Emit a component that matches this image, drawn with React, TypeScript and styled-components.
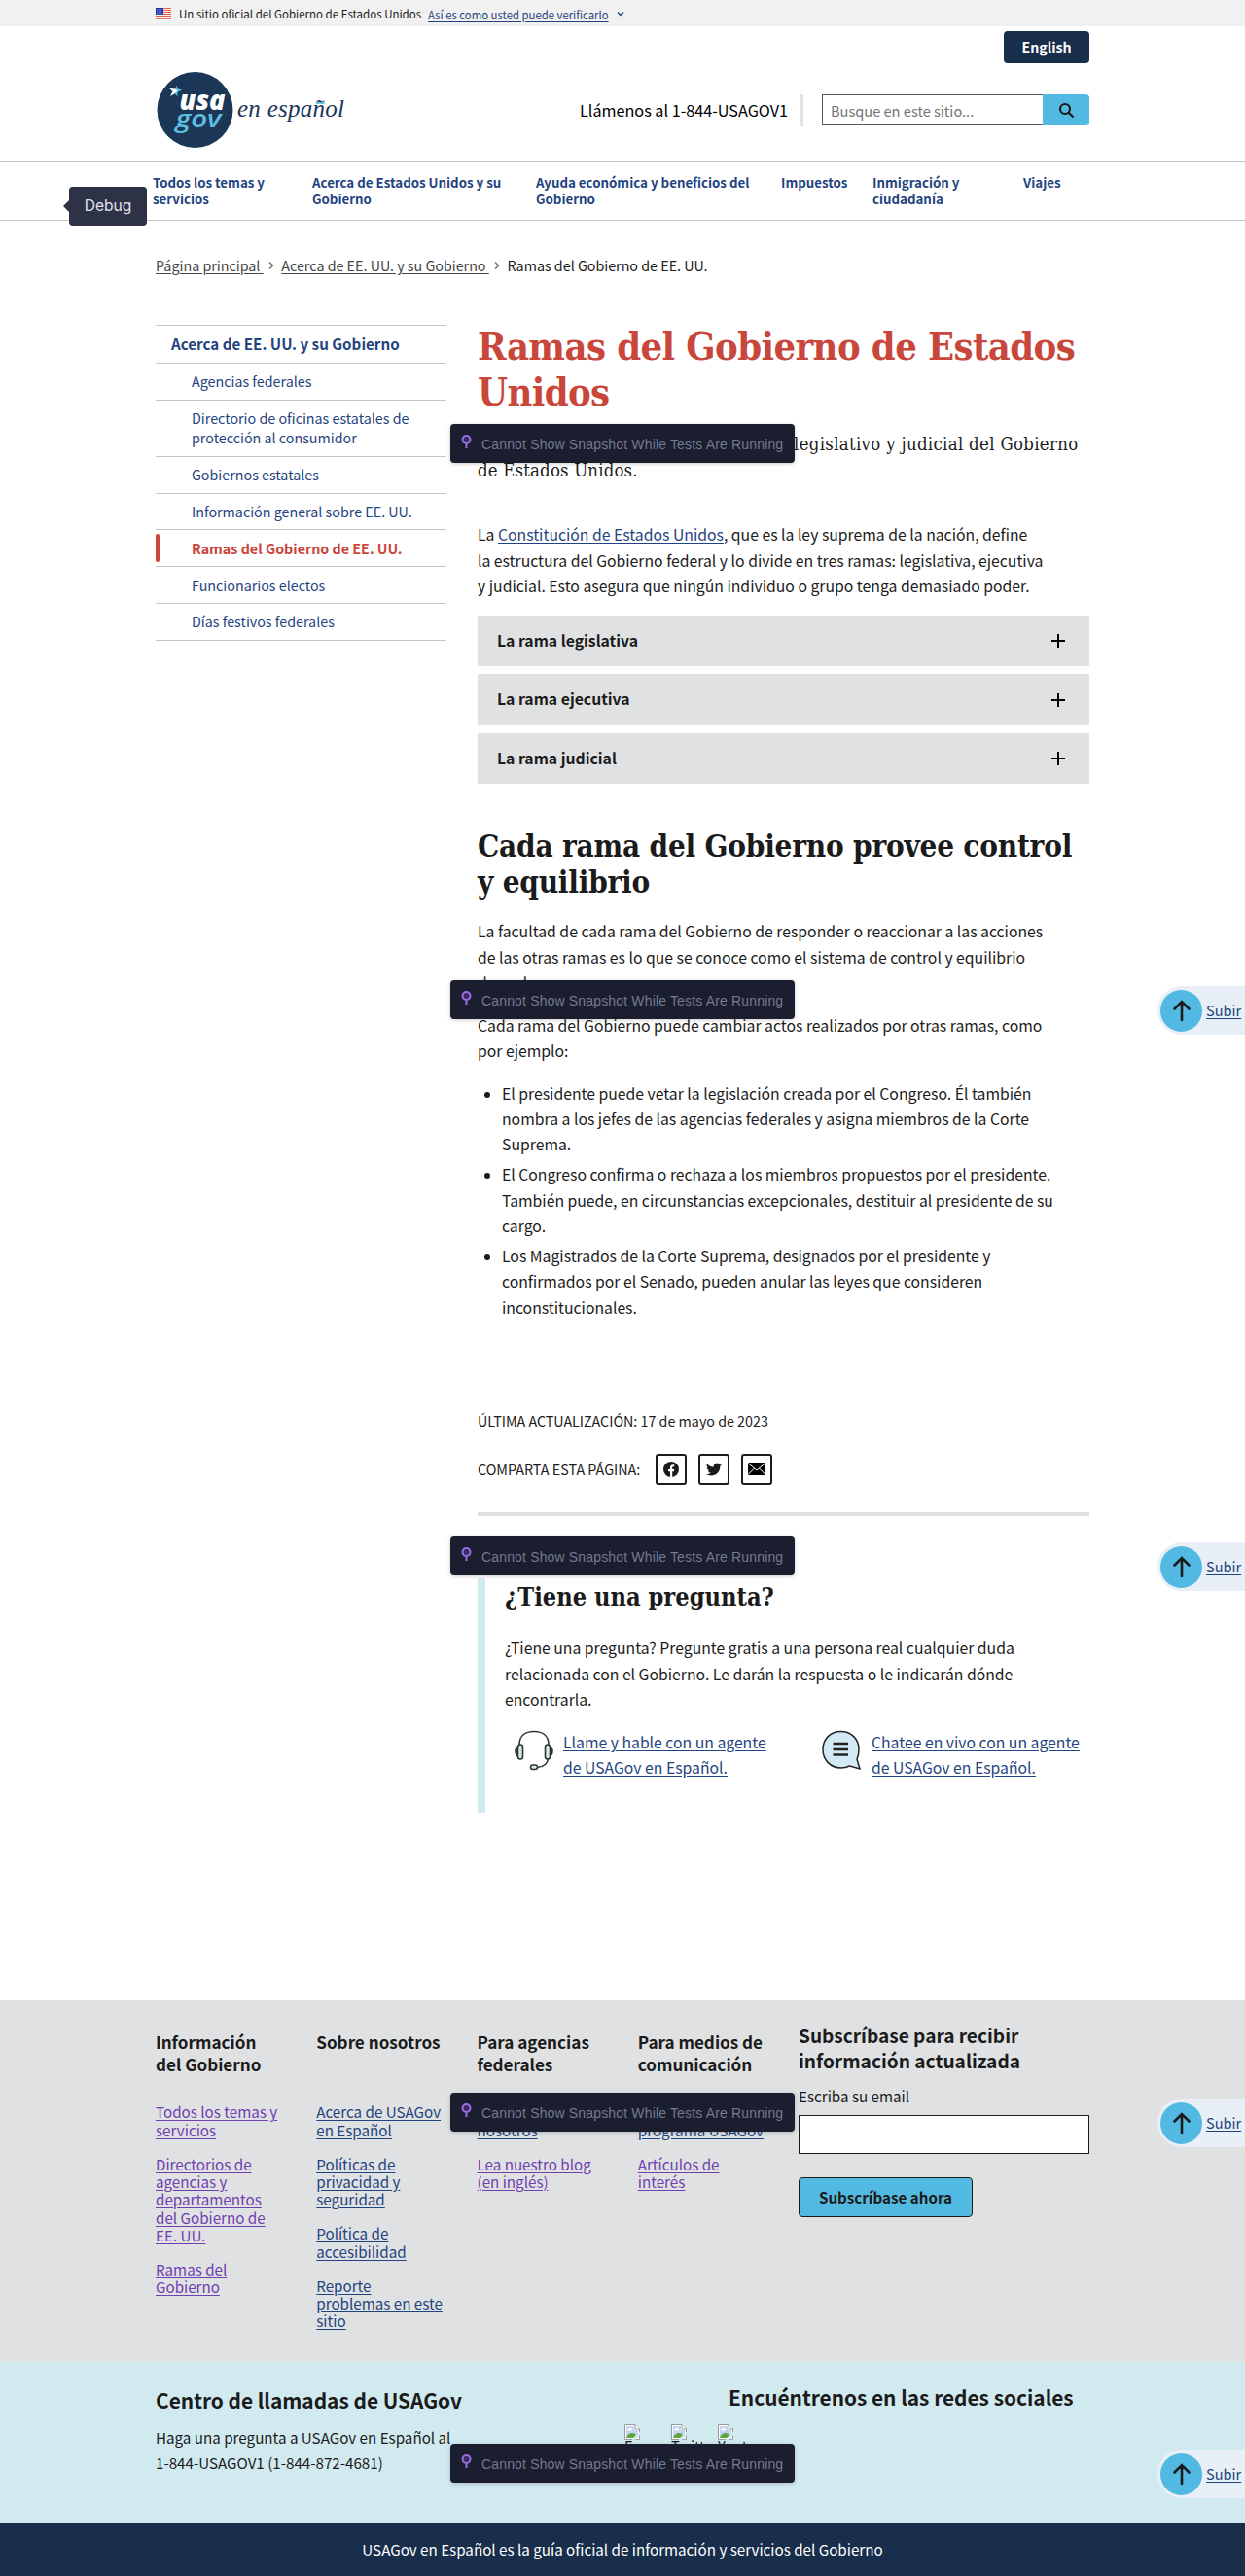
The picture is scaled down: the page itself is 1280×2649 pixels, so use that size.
import React from "react";
import styled, { createGlobalStyle } from "styled-components";

const sans = `"Noto Sans CJK SC", "Open Sans", sans-serif`;
const serif = `"DejaVu Serif Condensed", "DejaVu Serif", serif`;
const ink = "#1b1b1b";
const blue = "#1f4480";
const sky = "#52bae2";
const navy = "#182e4b";

const Global = createGlobalStyle`
  *, *::before, *::after { box-sizing: border-box; }
  body { margin: 0; background: #fff; color: ${ink}; font-family: ${sans}; }
  h1, h2, h3, p, ul { margin: 0; padding: 0; }
`;

const Page = styled.div`
  position: relative;
  width: 1280px;
  height: 2649px;
  overflow: hidden;
  font-size: 15.18px;
`;
const Container = styled.div`
  width: 960px;
  margin: 0 auto;
`;
const Line = styled.span<{ $ls?: number }>`
  display: block;
  white-space: nowrap;
  letter-spacing: ${(p) => p.$ls ?? 0}px;
`;
const Link = styled.a<{ $visited?: boolean }>`
  color: ${(p) => (p.$visited ? "#7040b0" : blue)};
  text-decoration: underline;
  text-underline-offset: 2px;
`;

/* ---------- banner and header ---------- */
const Banner = styled.div`
  height: 27px;
  background: #f1f1f1;
`;
const BannerRow = styled(Container)`
  display: flex;
  align-items: center;
  height: 27px;
  font-size: 11.5px;
  line-height: 16px;
  white-space: nowrap;
`;
const BannerText = styled.span`
  width: 256px;
  margin-left: 8px;
`;
const BannerLink = styled(Link)`
  margin-top: 2px;
  width: 194px;
  font-size: 11.35px;
`;
const Header = styled.header`
  height: 140px;
  border-bottom: 1px solid #c3c5c7;
`;
const HeaderInner = styled(Container)`
  display: flex;
  flex-direction: column;
`;
const LangButton = styled.button`
  align-self: flex-end;
  width: 88px;
  height: 33px;
  margin-top: 5px;
  padding: 0;
  border: 0;
  border-radius: 4px;
  background: ${navy};
  color: #fff;
  font: 700 14.2px/33px ${sans};
`;
const BrandRow = styled.div`
  display: flex;
  align-items: center;
  height: 78px;
  margin-top: 9px;
`;
const Phone = styled.span`
  margin-left: auto;
  width: 215px;
  font-size: 16.2px;
  line-height: 24px;
  color: #000;
  white-space: nowrap;
`;
const Divider = styled.span`
  width: 3px;
  height: 33px;
  margin: 0 19px 0 12px;
  background: #e2e3e4;
`;
const Search = styled.form`
  display: flex;
  width: 275px;
  height: 32px;
`;
const SearchInput = styled.input`
  flex: 1;
  min-width: 0;
  padding: 0 8px;
  border: 1px solid #565c65;
  border-right: 0;
  font: 14.6px ${sans};
  &::placeholder { color: #757575; opacity: 1; }
`;
const SearchButton = styled.button`
  display: flex;
  align-items: center;
  justify-content: center;
  width: 48px;
  padding: 0;
  border: 0;
  border-radius: 0 4px 4px 0;
  background: ${sky};
`;
const Nav = styled.nav`
  height: 60px;
  border-bottom: 1px solid #c3c5c7;
`;
const NavList = styled.div`
  display: flex;
  width: 966px;
  margin: 0 auto 0 157px;
  padding-top: 12px;
  color: ${blue};
  font-size: 13.3px;
  font-weight: 700;
  line-height: 17px;
`;
const NavItem = styled.div<{ $w: number }>`
  width: ${(p) => p.$w}px;
`;
const Crumbs = styled(Container)`
  display: flex;
  align-items: center;
  height: 20px;
  margin-top: 36px;
  font-size: 14.3px;
  line-height: 20px;
  white-space: nowrap;
`;
const Crumb = styled.a<{ $w: number }>`
  width: ${(p) => p.$w}px;
  color: #454545;
  text-decoration: underline;
  text-underline-offset: 2px;
  white-space: pre;
`;
const CrumbSep = styled.svg`
  margin: 0 7.3px 0 5px;
`;

/* ---------- main ---------- */
const Main = styled(Container)`
  display: flex;
  justify-content: space-between;
  height: 1774px;
`;
const Side = styled.aside`
  width: 299px;
  margin-top: 51px;
  border-bottom: 1px solid #c3c5c7;
  align-self: flex-start;
  color: ${blue};
`;
const SideTitle = styled.div`
  height: 39px;
  padding: 8px 16px;
  border-top: 1px solid #c3c5c7;
  font-size: 15.18px;
  font-weight: 700;
  line-height: 20px;
`;
const SideItem = styled.div<{ $active?: boolean }>`
  position: relative;
  padding: 8.4px 0 8.46px 37px;
  border-top: 1px solid #c3c5c7;
  font-size: 14.3px;
  line-height: 20px;
  color: ${(p) => (p.$active ? "#c9463b" : blue)};
  font-weight: ${(p) => (p.$active ? 700 : 400)};
  &::before {
    content: "";
    display: ${(p) => (p.$active ? "block" : "none")};
    position: absolute;
    left: 0;
    top: 4px;
    bottom: 4px;
    width: 4px;
    border-radius: 4px;
    background: #c9463b;
  }
`;
const Content = styled.article`
  width: 629px;
  padding-top: 50px;
`;
const H1 = styled.h1`
  color: #c9463b;
  font: 700 39.6px/47px ${serif};
`;
const Intro = styled.p`
  margin-top: 16.4px;
  font: 400 18.4px/27px ${serif};
`;
const IntroLine = styled.span`
  display: flex;
  white-space: nowrap;
`;
const IntroStart = styled.span`
  width: 325px;
  overflow: hidden;
`;
const P = styled.p<{ $mt: number; $size?: number }>`
  margin-top: ${(p) => p.$mt}px;
  font-size: ${(p) => p.$size ?? 15.75}px;
  line-height: 26.4px;
`;
const Accordion = styled.div`
  display: flex;
  flex-direction: column;
  gap: 8px;
  margin-top: 16.6px;
`;
const AccordionItem = styled.div`
  display: flex;
  align-items: center;
  justify-content: space-between;
  height: 52.4px;
  padding: 0 24px 0 20px;
  background: #dfe1e2;
  font-size: 15.75px;
  font-weight: 700;
  line-height: 24px;
`;
const AccordionLabel = styled.span`
  margin-top: -0.6px;
`;
const H2 = styled.h2`
  margin-top: 46px;
  font: 700 31.2px/37px ${serif};
`;
const List = styled.ul`
  display: flex;
  flex-direction: column;
  gap: 4.5px;
  margin-top: 17px;
  list-style: none;
  font-size: 15.75px;
  line-height: 26.4px;
`;
const Item = styled.li`
  display: flex;
  &::before {
    content: "";
    width: 6px;
    height: 6px;
    margin: 11px 12px 0 7px;
    border-radius: 50%;
    background: ${ink};
  }
`;
const Updated = styled.div`
  margin-top: 90.4px;
  font-size: 14.3px;
  line-height: 24px;
`;
const Share = styled.div`
  display: flex;
  align-items: center;
  gap: 12px;
  height: 32px;
  margin-top: 22px;
  font-size: 14.35px;
`;
const ShareLabel = styled.span`
  width: 171px;
  white-space: nowrap;
`;
const ShareButton = styled.span`
  display: flex;
  align-items: center;
  justify-content: center;
  width: 32px;
  height: 32px;
  border: 2px solid ${ink};
  border-radius: 3px;
`;
const Rule = styled.div`
  height: 4px;
  margin-top: 28px;
  background: #e0e0e0;
`;
const Question = styled.section`
  height: 241px;
  margin-top: 64px;
  padding: 4px 0 0 20px;
  border-left: 8px solid #d1eaf0;
`;
const QuestionTitle = styled.h2`
  font: 700 25.2px/30px ${serif};
`;
const Contacts = styled.div`
  display: flex;
  margin: 17px 0 0 10px;
  font-size: 15.75px;
  line-height: 26.4px;
`;
const Contact = styled.div`
  display: flex;
  width: 316px;
  gap: 10px;
  flex: none;
`;

/* ---------- footer ---------- */
const Footer = styled.footer`
  height: 372px;
  background: #dfe1e2;
`;
const FooterRow = styled(Container)`
  display: flex;
`;
const FooterCol = styled.div`
  width: 165.25px;
  padding-top: 31px;
  flex: none;
`;
const FooterTitle = styled.h3`
  height: 46px;
  margin-bottom: 28.4px;
  font-size: 17.1px;
  font-weight: 700;
  line-height: 23px;
`;
const FooterLink = styled(Link)`
  display: block;
  margin-bottom: 16.8px;
  line-height: 18.3px;
`;
const Subscribe = styled.div`
  width: 299px;
  padding-top: 23px;
`;
const SubscribeTitle = styled.h3`
  font-size: 19.1px;
  font-weight: 700;
  line-height: 26px;
`;
const Label = styled.label`
  display: block;
  margin-top: 11px;
  line-height: 24px;
`;
const EmailInput = styled.input`
  display: block;
  width: 299px;
  height: 40px;
  margin-top: 8px;
  border: 1px solid ${ink};
  background: #fff;
`;
const SubscribeButton = styled.button`
  display: block;
  width: 179px;
  height: 41px;
  margin-top: 24px;
  padding: 0 0 2px;
  border: 1px solid ${ink};
  border-radius: 4px;
  background: ${sky};
  color: ${ink};
  font: 700 15.18px/36px ${sans};
`;
const ContactBar = styled.section`
  height: 166px;
  background: #d1eaf0;
`;
const ContactRow = styled(Container)`
  display: flex;
  justify-content: space-between;
`;
const CallCenter = styled.div`
  padding-top: 26px;
`;
const BarTitle = styled.h3`
  font-size: 20.85px;
  font-weight: 700;
  line-height: 26px;
`;
const Social = styled.div`
  width: 478px;
  padding-top: 23px;
`;
const SocialTitle = styled(BarTitle)`
  padding-left: 107px;
`;
const SocialList = styled.div`
  display: flex;
  gap: 16px;
  margin-top: 15px;
`;
const SocialItem = styled.div`
  display: flex;
  flex-direction: column;
  width: 32px;
  overflow: hidden;
  font-size: 14.6px;
  line-height: 12px;
`;
const Identifier = styled.div`
  height: 54px;
  background: ${navy};
  color: #fff;
  text-align: center;
  font-size: 15.18px;
  line-height: 53px;
`;

/* ---------- floating layers ---------- */
const Debug = styled.div`
  position: absolute;
  left: 71px;
  top: 192px;
  width: 80px;
  height: 40px;
  border-radius: 4px;
  background: #2e3247;
  color: #e1e3ed;
  font: 400 15.6px/40px Inter, sans-serif;
  text-align: center;
  &::before {
    content: "";
    position: absolute;
    left: -6px;
    top: 14px;
    border: 6px solid transparent;
    border-left: 0;
    border-right-color: #2e3247;
  }
`;
const Snapshot = styled.div<{ $top: number }>`
  position: absolute;
  left: 463px;
  top: ${(p) => p.$top}px;
  display: flex;
  align-items: center;
  width: 354px;
  height: 40px;
  padding: 2px 0 0 11px;
  border-radius: 4px;
  background: #1b1e2e;
  color: #747994;
  font: 400 14px/20px "Liberation Sans", sans-serif;
  letter-spacing: 0.16px;
  white-space: nowrap;
  box-shadow: 0 1px 4px rgba(0, 0, 0, 0.2);
`;
const PinIcon = styled.svg`
  margin: -5px 10px 0 0;
`;
const ToTop = styled.div<{ $top: number }>`
  position: absolute;
  right: 0;
  top: ${(p) => p.$top}px;
  display: flex;
  align-items: center;
  width: 90px;
  height: 50px;
  padding-left: 3px;
  border-radius: 25px 0 0 25px;
  background: #e8eff6;
  font-size: 14.6px;
`;
const TopLabel = styled(Link)`
  margin-top: -1px;
`;
const TopCircle = styled.span`
  display: flex;
  align-items: center;
  justify-content: center;
  width: 43px;
  height: 43px;
  margin-right: 4px;
  border-radius: 50%;
  background: ${sky};
`;

const Flag = () => (
  <svg width="16" height="12" viewBox="0 0 16 12">
    <rect width="16" height="12" fill="#fff" />
    {[0, 2, 4, 6, 8, 10].map((y) => (
      <rect key={y} y={y} width="16" height="1.1" fill="#e0624c" />
    ))}
    <rect y="11.2" width="16" height=".8" fill="#e0624c" />
    <rect width="8" height="7" fill="#1e33b1" />
    {[1.5, 3.5, 5.5].map((y) =>
      [1.5, 3.5, 5.5].map((x) => <rect key={`${x}${y}`} x={x} y={y} width=".8" height=".8" fill="#fff" />)
    )}
  </svg>
);

const Logo = () => (
  <svg width="200" height="80" viewBox="0 0 200 80">
    <circle cx="40.500" cy="40" r="39" fill="#1b3657" />
    <path d="M14 18L21 18.500L26.500 19.500L22.500 21.500L15 26L17.500 21Z" fill="#fff" />
    <path d="M22 14.500L22.500 18.300L27 19.500L22.800 21.500L22.300 26L19.500 23.500L22.500 20.500L20 18.300Z" fill={sky} />
    <text x="24.500" y="40" fill="#fff" fontFamily="Open Sans" fontWeight="800" fontStyle="italic" fontSize="28" textLength="47" lengthAdjust="spacingAndGlyphs">usa</text>
    <text x="20.500" y="57.500" fill="#5bc0e0" fontFamily="Open Sans" fontWeight="600" fontStyle="italic" fontSize="26" textLength="47" lengthAdjust="spacingAndGlyphs">gov</text>
    <text x="84" y="47" fill="#1b3657" fontFamily="Liberation Serif" fontStyle="italic" fontSize="25" textLength="110">en español</text>
    <path d="M165 33.500C168 31.500 170 34.500 174 32.500" fill="none" stroke="#5bc0e0" strokeWidth="1.800" />
  </svg>
);

const Headset = () => (
  <svg width="40" height="42" viewBox="0 0 40 42" fill="none" stroke="#333" strokeWidth="1.6">
    <path d="M5 15C5 6 11 1.500 20 1.500S35 6 35 15M34.500 29C34 36 29 38 23 38.500" />
    <rect x="3.500" y="15" width="5" height="15" rx="2.500" fill="#d1eaf0" />
    <rect x="31.500" y="15" width="5" height="15" rx="2.500" fill="#d1eaf0" />
    <path d="M2.500 18C.5 20 .5 24 2.500 26ZM37.500 18C39.500 20 39.500 24 37.500 26Z" fill="#333" />
    <rect x="16.500" y="36" width="7" height="4.500" rx="2.200" fill="#d1eaf0" />
  </svg>
);

const Chat = () => (
  <svg width="41" height="42" viewBox="0 0 41 42" fill="none" stroke="#222">
    <path d="M19.500 1.500C9 1.500 1 9 1 20S9 39 19.500 39C23 39 26 38.300 28.500 37L39 40L36 30C37.500 27 38 24 38 20C38 9 30 1.500 19.500 1.500Z" fill="#d1eaf5" strokeWidth="1.500" />
    <path d="M11.500 14H27M11.500 20H27M11.500 25.500H27" strokeWidth="2.600" />
  </svg>
);

const Broken = () => (
  <svg width="16" height="16" viewBox="0 0 16 16">
    <path d="M0.500 0.500H11L15.500 5V15.500H0.500Z" fill="#fff" stroke="#9a9a9a" />
    <path d="M2 2H10V6H14V14H2Z" fill="#c3d5f7" />
    <path d="M3 6.500Q3 4 5 4.200Q7 2.800 7.500 5Q9 5.500 8 6.500Z" fill="#fff" />
    <path d="M2 14Q4 9 8 9Q11 9 12 11L9 14Z" fill="#5da83a" />
    <path d="M11 0.500V5H15.500" fill="#fff" stroke="#9a9a9a" />
    <path d="M16 7.500L7.500 16H11L16 11Z" fill="#d1eaf0" />
  </svg>
);

const Plus = () => (
  <svg width="16" height="16" viewBox="0 0 16 16" stroke="#000" strokeWidth="2">
    <path d="M8 1V15M1 8H15" />
  </svg>
);

const Chevron = () => (
  <CrumbSep width="6" height="10" viewBox="0 0 6 10" fill="none" stroke="#71767a" strokeWidth="1.500">
    <path d="M1 1.500L4.500 5L1 8.500" />
  </CrumbSep>
);

const navItems: { w: number; lines: string[] }[] = [
  { w: 164, lines: ["Todos los temas y", "servicios"] },
  { w: 230, lines: ["Acerca de Estados Unidos y su", "Gobierno"] },
  { w: 252, lines: ["Ayuda económica y beneficios del", "Gobierno"] },
  { w: 94, lines: ["Impuestos"] },
  { w: 155, lines: ["Inmigración y", "ciudadanía"] },
  { w: 60, lines: ["Viajes"] },
];

const sideItems: { lines: string[]; active?: boolean }[] = [
  { lines: ["Agencias federales"] },
  { lines: ["Directorio de oficinas estatales de", "protección al consumidor"] },
  { lines: ["Gobiernos estatales"] },
  { lines: ["Información general sobre EE. UU."] },
  { lines: ["Ramas del Gobierno de EE. UU."], active: true },
  { lines: ["Funcionarios electos"] },
  { lines: ["Días festivos federales"] },
];

const bullets = [
  [
    "El presidente puede vetar la legislación creada por el Congreso. Él también",
    "nombra a los jefes de las agencias federales y asigna miembros de la Corte",
    "Suprema.",
  ],
  [
    "El Congreso confirma o rechaza a los miembros propuestos por el presidente.",
    "También puede, en circunstancias excepcionales, destituir al presidente de su",
    "cargo.",
  ],
  [
    "Los Magistrados de la Corte Suprema, designados por el presidente y",
    "confirmados por el Senado, pueden anular las leyes que consideren",
    "inconstitucionales.",
  ],
];

const footerCols: { title: string[]; links: { lines: string[]; visited?: boolean }[] }[] = [
  {
    title: ["Información", "del Gobierno"],
    links: [
      { lines: ["Todos los temas y", "servicios"], visited: true },
      { lines: ["Directorios de", "agencias y", "departamentos", "del Gobierno de", "EE. UU."], visited: true },
      { lines: ["Ramas del", "Gobierno"], visited: true },
    ],
  },
  {
    title: ["Sobre nosotros"],
    links: [
      { lines: ["Acerca de USAGov", "en Español"] },
      { lines: ["Políticas de", "privacidad y", "seguridad"] },
      { lines: ["Política de", "accesibilidad"] },
      { lines: ["Reporte", "problemas en este", "sitio"] },
    ],
  },
  {
    title: ["Para agencias", "federales"],
    links: [
      { lines: ["Colabore con", "nosotros"] },
      { lines: ["Lea nuestro blog", "(en inglés)"], visited: true },
    ],
  },
  {
    title: ["Para medios de", "comunicación"],
    links: [
      { lines: ["Conozca el", "programa USAGov"] },
      { lines: ["Artículos de", "interés"], visited: true },
    ],
  },
];

const Lines = ({ of, ls }: { of: string[]; ls?: number }) => (
  <>
    {of.map((l) => (
      <Line key={l} $ls={ls}>
        {l}
      </Line>
    ))}
  </>
);

export default function App() {
  return (
    <Page>
      <Global />
      <Banner>
        <BannerRow>
          <Flag />
          <BannerText>Un sitio oficial del Gobierno de Estados Unidos</BannerText>
          <BannerLink>Así es como usted puede verificarlo</BannerLink>
          <svg width="8" height="6" viewBox="0 0 8 6" fill="none" stroke={blue} strokeWidth="1.500">
            <path d="M1 1.500L4 4.500L7 1.500" />
          </svg>
        </BannerRow>
      </Banner>
      <Header>
        <HeaderInner>
          <LangButton>English</LangButton>
          <BrandRow>
            <Logo />
            <Phone>Llámenos al 1-844-USAGOV1</Phone>
            <Divider />
            <Search>
              <SearchInput placeholder="Busque en este sitio..." />
              <SearchButton type="button">
                <svg width="17" height="17" viewBox="0 0 17 17" fill="none" stroke={ink} strokeWidth="2.200">
                  <circle cx="7" cy="7" r="5" />
                  <path d="M10.500 10.500L15.500 15.500" />
                </svg>
              </SearchButton>
            </Search>
          </BrandRow>
        </HeaderInner>
      </Header>
      <Nav>
        <NavList>
          {navItems.map((n) => (
            <NavItem key={n.lines[0]} $w={n.w}>
              <Lines of={n.lines} />
            </NavItem>
          ))}
        </NavList>
      </Nav>
      <Crumbs>
        <Crumb $w={111}>Página principal </Crumb>
        <Chevron />
        <Crumb $w={214}>Acerca de EE. UU. y su Gobierno </Crumb>
        <Chevron />
        <span>Ramas del Gobierno de EE. UU.</span>
      </Crumbs>
      <Main>
        <Side>
          <SideTitle>Acerca de EE. UU. y su Gobierno</SideTitle>
          {sideItems.map((s) => (
            <SideItem key={s.lines[0]} $active={s.active}>
              <Lines of={s.lines} />
            </SideItem>
          ))}
        </Side>
        <Content>
          <H1>
            <Lines ls={-0.6} of={["Ramas del Gobierno de Estados", "Unidos"]} />
          </H1>
          <Intro>
            <IntroLine>
              <IntroStart>Conozca sobre los poderes ejecutivo,</IntroStart>
              <Line $ls={0.34}>legislativo y judicial del Gobierno</Line>
            </IntroLine>
            <Line $ls={0.2}>de Estados Unidos.</Line>
          </Intro>
          <P $mt={39.8}>
            <Line>
              La <Link>Constitución de Estados Unidos</Link>, que es la ley suprema de la nación, define
            </Line>
            <Lines
              of={[
                "la estructura del Gobierno federal y lo divide en tres ramas: legislativa, ejecutiva",
                "y judicial. Esto asegura que ningún individuo o grupo tenga demasiado poder.",
              ]}
            />
          </P>
          <Accordion>
            {["La rama legislativa", "La rama ejecutiva", "La rama judicial"].map((t) => (
              <AccordionItem key={t}>
                <AccordionLabel>{t}</AccordionLabel>
                <Plus />
              </AccordionItem>
            ))}
          </Accordion>
          <H2>
            <Lines ls={-0.22} of={["Cada rama del Gobierno provee control", "y equilibrio"]} />
          </H2>
          <P $mt={19}>
            <Lines
              of={[
                "La facultad de cada rama del Gobierno de responder o reaccionar a las acciones",
                "de las otras ramas es lo que se conoce como el sistema de control y equilibrio",
                "de poder.",
              ]}
            />
          </P>
          <P $mt={17.4}>
            <Lines of={["Cada rama del Gobierno puede cambiar actos realizados por otras ramas, como", "por ejemplo:"]} />
          </P>
          <List>
            {bullets.map((b) => (
              <Item key={b[0]}>
                <div>
                  <Lines of={b} />
                </div>
              </Item>
            ))}
          </List>
          <Updated>ÚLTIMA ACTUALIZACIÓN: 17 de mayo de 2023</Updated>
          <Share>
            <ShareLabel>COMPARTA ESTA PÁGINA:</ShareLabel>
            <ShareButton>
              <svg width="16" height="16" viewBox="0 0 16 16">
                <circle cx="8" cy="8" r="8" fill={ink} />
                <path d="M7 16V10.200H5V8H7V6.200C7 4.200 8.100 3.200 9.900 3.200L11.200 3.300V5.200H10.300C9.400 5.200 9.200 5.700 9.200 6.300V8H11.200L10.900 10.200H9.200V16Z" fill="#fff" />
              </svg>
            </ShareButton>
            <ShareButton>
              <svg width="16" height="16" viewBox="0 0 24 24" fill={ink}>
                <path d="M23.900 4.600c-.9.400-1.800.7-2.800.8 1-.6 1.800-1.600 2.200-2.700-1 .6-2 1-3.100 1.200a4.900 4.900 0 0 0-8.400 4.500C7.700 8.200 4.100 6.300 1.700 3.200a4.900 4.900 0 0 0 1.500 6.500c-.8 0-1.600-.2-2.200-.6v.1a4.900 4.900 0 0 0 3.900 4.800c-.7.200-1.500.2-2.200.1a4.900 4.900 0 0 0 4.600 3.400A9.900 9.900 0 0 1 0 19.500a14 14 0 0 0 7.500 2.200c9.100 0 14-7.500 14-14v-.6c1-.7 1.800-1.600 2.400-2.500Z" />
              </svg>
            </ShareButton>
            <ShareButton>
              <svg width="18" height="13" viewBox="0 0 18 13">
                <rect width="18" height="13" fill="#000" />
                <path d="M0 .5L9 8L18 .5M0 12.500L6.500 6M18 12.500L11.500 6" fill="none" stroke="#fff" strokeWidth="1" />
              </svg>
            </ShareButton>
          </Share>
          <Rule />
          <Question>
            <QuestionTitle>
              <Line>¿Tiene una pregunta?</Line>
            </QuestionTitle>
            <P $mt={25.8}>
              <Lines
                of={[
                  "¿Tiene una pregunta? Pregunte gratis a una persona real cualquier duda",
                  "relacionada con el Gobierno. Le darán la respuesta o le indicarán dónde",
                  "encontrarla.",
                ]}
              />
            </P>
            <Contacts>
              <Contact>
                <Headset />
                <Link>
                  <Lines of={["Llame y hable con un agente", "de USAGov en Español."]} />
                </Link>
              </Contact>
              <Contact>
                <Chat />
                <Link>
                  <Lines of={["Chatee en vivo con un agente", "de USAGov en Español."]} />
                </Link>
              </Contact>
            </Contacts>
          </Question>
        </Content>
      </Main>
      <Footer>
        <FooterRow>
          {footerCols.map((c) => (
            <FooterCol key={c.title[0]}>
              <FooterTitle>
                <Lines of={c.title} />
              </FooterTitle>
              {c.links.map((l) => (
                <FooterLink key={l.lines[0]} $visited={l.visited}>
                  <Lines of={l.lines} />
                </FooterLink>
              ))}
            </FooterCol>
          ))}
          <Subscribe>
            <SubscribeTitle>
              <Lines of={["Subscríbase para recibir", "información actualizada"]} />
            </SubscribeTitle>
            <Label>Escriba su email</Label>
            <EmailInput />
            <SubscribeButton>Subscríbase ahora</SubscribeButton>
          </Subscribe>
        </FooterRow>
      </Footer>
      <ContactBar>
        <ContactRow>
          <CallCenter>
            <BarTitle>Centro de llamadas de USAGov</BarTitle>
            <P $mt={12} $size={15.18}>
              <Lines of={["Haga una pregunta a USAGov en Español al", "1-844-USAGOV1 (1-844-872-4681)"]} />
            </P>
          </CallCenter>
          <Social>
            <SocialTitle>Encuéntrenos en las redes sociales</SocialTitle>
            <SocialList>
              {["Face", "Twitter", "Youtube"].map((s) => (
                <SocialItem key={s}>
                  <Broken />
                  <span>{s}</span>
                </SocialItem>
              ))}
            </SocialList>
          </Social>
        </ContactRow>
      </ContactBar>
      <Identifier>USAGov en Español es la guía oficial de información y servicios del Gobierno</Identifier>

      <Debug>Debug</Debug>
      {[1014, 1586, 2158, 2519].map((top) => (
        <ToTop key={top} $top={top}>
          <TopCircle>
            <svg width="20" height="23" viewBox="0 0 20 23" fill="none" stroke={ink} strokeWidth="2.600" strokeLinecap="round">
              <path d="M10 2V21M2.500 9.500L10 2L17.500 9.500" />
            </svg>
          </TopCircle>
          <TopLabel>Subir</TopLabel>
        </ToTop>
      ))}
      {[436, 1008, 1580, 2152, 2513].map((top) => (
        <Snapshot key={top} $top={top}>
          <PinIcon width="11" height="15" viewBox="0 0 11 15" fill="#3a2a66" stroke="#9a6fe0" strokeWidth="2">
            <path d="M5.500 9.500V14" />
            <circle cx="5.500" cy="5" r="4" />
          </PinIcon>
          Cannot Show Snapshot While Tests Are Running
        </Snapshot>
      ))}
    </Page>
  );
}
